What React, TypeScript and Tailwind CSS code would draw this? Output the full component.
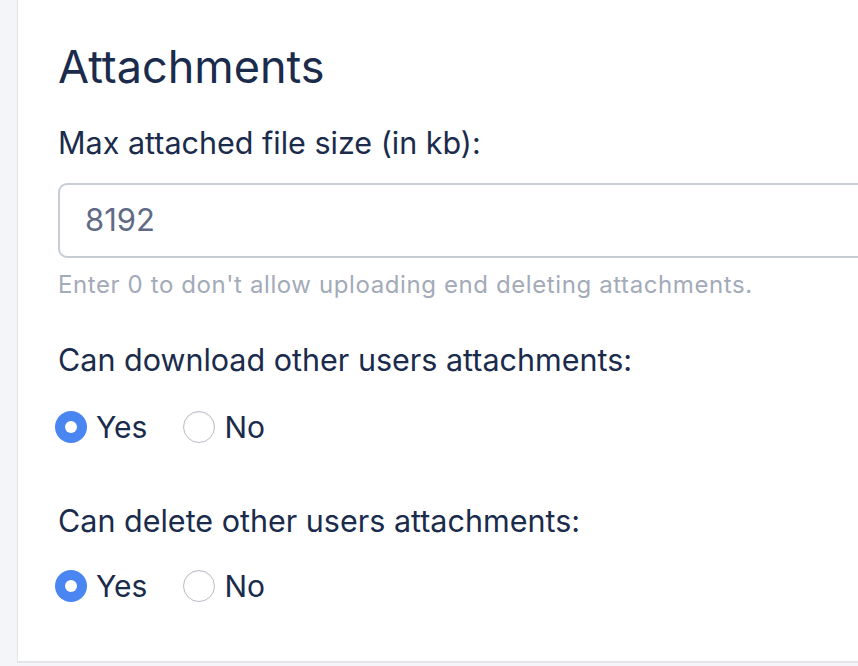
import React from "react";

function Radio({ checked, label }: { checked: boolean; label: string }) {
  return (
    <label className="flex items-center gap-[9px]">
      {checked ? (
        <span className="flex h-[32px] w-[32px] items-center justify-center rounded-full bg-[#4a86f1]">
          <span className="h-[12px] w-[12px] rounded-full bg-white" />
        </span>
      ) : (
        <span className="h-[32px] w-[32px] rounded-full border-[1.5px] border-[#b9bdc7] bg-white shadow-[inset_0_1px_2px_rgba(0,0,0,0.06)]" />
      )}
      <span className="text-[30px] leading-none text-[#1a2b4c]">{label}</span>
    </label>
  );
}

export default function App() {
  return (
    <div
      className="flex h-[666px] w-[858px] overflow-hidden bg-[#f4f5f8]"
      style={{ fontFamily: "Inter, 'Noto Sans', sans-serif" }}
    >
      <div className="ml-[17px] h-[663px] flex-1 border-b-2 border-l border-[#e2e4e9] bg-white pl-[40px] pt-[40px]">
        <h2 className="text-[45px] leading-[54px] font-normal text-[#1a2b4c]">Attachments</h2>
        <div className="mt-[31px] text-[30.5px] leading-[36px] text-[#1a2b4c]">Max attached file size (in kb):</div>
        <div className="mt-[22px] -mr-[40px] flex h-[75px] items-center rounded-[9px] border-2 border-[#c8ccd4] pl-[25px] text-[31px] text-[#5f6b85]">
          8192
        </div>
        <div className="mt-[13px] text-[24px] leading-[28px] tracking-[0.6px] text-[#a3aab8]">
          Enter 0 to don't allow uploading end deleting attachments.
        </div>
        <div className="mt-[43px] text-[30.5px] leading-[36px] text-[#1a2b4c]">Can download other users attachments:</div>
        <div className="mt-[33px] -ml-[3px] flex gap-[36px]">
          <Radio checked label="Yes" />
          <Radio checked={false} label="No" />
        </div>
        <div className="mt-[60px] text-[30.5px] leading-[36px] text-[#1a2b4c]">Can delete other users attachments:</div>
        <div className="mt-[31px] -ml-[3px] flex gap-[36px]">
          <Radio checked label="Yes" />
          <Radio checked={false} label="No" />
        </div>
      </div>
    </div>
  );
}
